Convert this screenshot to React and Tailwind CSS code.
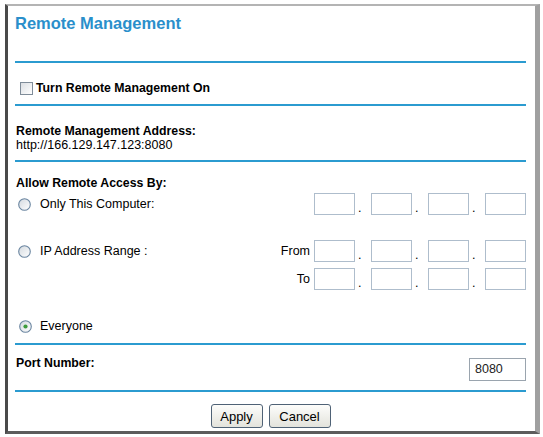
import React from "react";

function Line() {
  return <div className="h-[2px] bg-[#2b9bd0]" />;
}

function Radio({ checked }) {
  return (
    <svg width="13" height="13" viewBox="0 0 13 13" className="shrink-0">
      <defs>
        <linearGradient id="rg" x1="0" y1="0" x2="1" y2="1">
          <stop offset="0" stopColor="#d3d9df" />
          <stop offset="1" stopColor="#ffffff" />
        </linearGradient>
      </defs>
      <circle cx="6.5" cy="6.5" r="5.8" fill="url(#rg)" stroke="#6a85a0" strokeWidth="1.1" />
      {checked && <circle cx="6.5" cy="6.5" r="2.1" fill="#3d9b3d" />}
    </svg>
  );
}

function IpBoxes() {
  return (
    <div className="flex">
      {[0, 1, 2, 3].map((i) => (
        <React.Fragment key={i}>
          <div className="w-[41px] h-[22px] border border-[#aebdcc] bg-white" />
          {i < 3 && (
            <span className="w-[16px] h-[22px] flex items-end pl-[3px] leading-[14px] text-[12.5px] text-black">
              .
            </span>
          )}
        </React.Fragment>
      ))}
    </div>
  );
}

function Btn({ children, w }) {
  return (
    <button
      className={`${w} h-[24px] rounded-[3px] border border-[#4f6276] bg-gradient-to-b from-[#fdfdfb] to-[#e3e3dc] text-[13px] leading-none text-black`}
    >
      {children}
    </button>
  );
}

export default function App() {
  return (
    <div className="w-[543px] h-[437px] bg-white font-['Liberation_Sans',Arial,sans-serif] text-black">
      <div className="ml-[5px] pt-[4px]">
        <div className="w-[535px] h-[430px] border-l-[3px] border-l-[#4a4a4a] border-t-[2px] border-t-[#b4b4b4] border-r-[5px] border-r-[#a0a0a0] border-b-[3px] border-b-[#5c5c5c] pl-[7px] pr-[9px]">
          {/* Title */}
          <div className="h-[34px] flex items-center">
            <span className="text-[16.5px] leading-[20px] font-bold text-[#2a8fcb]">Remote Management</span>
          </div>
          <div className="h-[21px]" />
          <Line />
          {/* Checkbox */}
          <div className="h-[41px] pt-[9px] flex items-center">
            <div className="ml-[5px] w-[13px] h-[13px] border border-[#7f8c99] bg-gradient-to-br from-[#dcdfe3] to-white" />
            <span className="ml-[3px] text-[12.3px] leading-[14px] font-bold">Turn Remote Management On</span>
          </div>
          <Line />
          {/* Address */}
          <div className="h-[54px] pt-[18px] pl-[1px]">
            <div className="text-[12.3px] leading-[14px] font-bold">Remote Management Address:</div>
            <div className="text-[12.5px] leading-[14px]">http://166.129.147.123:8080</div>
          </div>
          <Line />
          {/* Allow access */}
          <div className="pt-[14px] pl-[1px] text-[12.3px] leading-[14px] font-bold">Allow Remote Access By:</div>
          <div className="mt-[3px] h-[22px] flex items-center justify-between">
            <div className="flex items-center ml-[3px]">
              <Radio />
              <span className="ml-[9px] text-[12.5px] leading-[14px]">Only This Computer:</span>
            </div>
            <IpBoxes />
          </div>
          <div className="mt-[25px] flex justify-between">
            <div className="h-[22px] flex items-center ml-[3px]">
              <Radio />
              <span className="ml-[9px] text-[12.5px] leading-[14px]">IP Address Range :</span>
            </div>
            <div className="flex flex-col gap-[6px]">
              <div className="flex items-center justify-end gap-[4px]">
                <span className="text-[12.5px] leading-[14px]">From</span>
                <IpBoxes />
              </div>
              <div className="flex items-center justify-end gap-[4px]">
                <span className="text-[12.5px] leading-[14px]">To</span>
                <IpBoxes />
              </div>
            </div>
          </div>
          <div className="mt-[29px] h-[14px] flex items-center ml-[4px]">
            <Radio checked />
            <span className="ml-[8px] text-[12.5px] leading-[14px]">Everyone</span>
          </div>
          <div className="h-[10px]" />
          <Line />
          {/* Port */}
          <div className="h-[45px] flex justify-between items-start pl-[1px]">
            <span className="mt-[10.5px] text-[12.3px] leading-[14px] font-bold">Port Number:</span>
            <div className="mt-[13px] w-[57px] h-[23px] border border-[#9aa4ae] flex items-center pl-[5px] text-[12.5px] text-[#222]">
              8080
            </div>
          </div>
          <Line />
          <div className="mt-[12px] flex justify-center gap-[6px]">
            <Btn w="w-[52px]">Apply</Btn>
            <Btn w="w-[62px]">Cancel</Btn>
          </div>
        </div>
      </div>
    </div>
  );
}
